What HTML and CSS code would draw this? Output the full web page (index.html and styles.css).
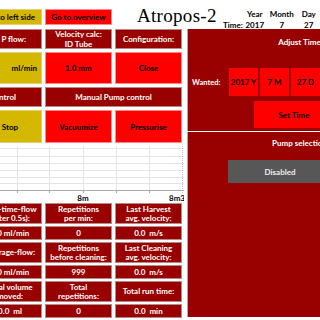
FILE: index.html
```html
<!DOCTYPE html>
<html lang="en">
<head>
    <meta charset="UTF-8">
    <title>Atropos-2</title>
    <link rel="stylesheet" href="styles.css">
</head>
<body>
    <div class="screen">
        <div class="top-bar">
            <div class="cell yellow btn-small">Go to left side</div>
            <div class="cell red btn-small">Go to overview</div>
            <div class="title">Atropos-2</div>
            <div class="clock">
                <span></span><span>Year</span><span>Month</span><span>Day</span>
                <span class="clock-label">Time:</span><span>2017</span><span>7</span><span>27</span>
            </div>
        </div>
        <div class="main">
            <div class="left-side">
                <div class="grid">
                    <div class="cell dark head shift-left flow-head">Set P flow:</div>
                    <div class="cell dark head">Velocity calc:<br>ID Tube</div>
                    <div class="cell dark head">Configuration:</div>

                    <div class="cell yellow big flow-value">ml/min</div>
                    <div class="cell red big">1.0 mm</div>
                    <div class="cell red big">Close</div>

                    <div class="cell dark head shift-left control-head">Pump control</div>
                    <div class="cell dark head wide">Manual Pump control</div>

                    <div class="cell yellow big">Stop</div>
                    <div class="cell red big">Vacuumize</div>
                    <div class="cell red big">Pressurise</div>
                </div>

                <svg class="chart" width="206" height="57" viewBox="0 0 206 57">
                    <g stroke="#e4e4e4" stroke-width="1">
                        <line x1="0" y1="2.5" x2="206" y2="2.5"/>
                        <line x1="0" y1="10.5" x2="206" y2="10.5"/>
                        <line x1="0" y1="17.5" x2="206" y2="17.5"/>
                        <line x1="0" y1="24.5" x2="206" y2="24.5"/>
                        <line x1="0" y1="31.5" x2="206" y2="31.5"/>
                        <line x1="0" y1="37.5" x2="206" y2="37.5"/>
                        <line x1="39.5" y1="0" x2="39.5" y2="44"/>
                        <line x1="71.5" y1="0" x2="71.5" y2="44"/>
                        <line x1="105.5" y1="0" x2="105.5" y2="44"/>
                        <line x1="138.5" y1="0" x2="138.5" y2="44"/>
                        <line x1="171.5" y1="0" x2="171.5" y2="44"/>
                    </g>
                    <line x1="204.5" y1="0" x2="204.5" y2="47" stroke="#bbb" stroke-dasharray="1 1"/>
                    <line x1="0" y1="44.5" x2="206" y2="44.5" stroke="#aaa"/>
                    <g stroke="#aaa">
                        <line x1="39.5" y1="44" x2="39.5" y2="47"/>
                        <line x1="71.5" y1="44" x2="71.5" y2="47"/>
                        <line x1="105.5" y1="44" x2="105.5" y2="47"/>
                        <line x1="138.5" y1="44" x2="138.5" y2="47"/>
                        <line x1="171.5" y1="44" x2="171.5" y2="47"/>
                    </g>
                    <text x="105" y="55" class="axis-label" text-anchor="middle">8m</text>
                    <text x="207" y="55" class="axis-label" text-anchor="end">8m3</text>
                </svg>

                <div class="grid stats">
                    <div class="cell dark stat-head">Real-time-flow<br>(after 0.5s):</div>
                    <div class="cell dark stat-head">Repetitions<br>per min:</div>
                    <div class="cell dark stat-head">Last Harvest<br>avg. velocity:</div>
                    <div class="cell dark stat-value">0.0 ml/min</div>
                    <div class="cell dark stat-value">0</div>
                    <div class="cell dark stat-value">0.0&nbsp; m/s</div>

                    <div class="cell dark stat-head">Average-flow:</div>
                    <div class="cell dark stat-head">Repetitions<br>before cleaning:</div>
                    <div class="cell dark stat-head">Last Cleaning<br>avg. velocity:</div>
                    <div class="cell dark stat-value">0.0 ml/min</div>
                    <div class="cell dark stat-value">999</div>
                    <div class="cell dark stat-value">0.0&nbsp; m/s</div>

                    <div class="cell dark stat-head">Total volume<br>moved:</div>
                    <div class="cell dark stat-head">Total<br>repetitions:</div>
                    <div class="cell dark stat-head">Total run time:</div>
                    <div class="cell dark stat-value">0.0&nbsp; ml</div>
                    <div class="cell dark stat-value">0</div>
                    <div class="cell dark stat-value">0.0&nbsp; min</div>
                </div>
            </div>

            <div class="right-side">
                <div class="panel adjust">
                    <div class="panel-title">Adjust Time</div>
                    <div class="wanted-row">
                        <span class="wanted-label">Wanted:</span>
                        <div class="cell red date-btn">2017 Y</div>
                        <div class="cell red date-btn">7 M</div>
                        <div class="cell red date-btn">27 D</div>
                    </div>
                    <div class="cell red set-time">Set Time</div>
                </div>
                <div class="panel pump">
                    <div class="panel-title">Pump selection</div>
                    <div class="disabled-btn">Disabled</div>
                </div>
            </div>
        </div>
    </div>
</body>
</html>
```

FILE: styles.css
```css
html, body {
    margin: 0;
    padding: 0;
    background-color: #fff;
    overflow: hidden;
}
body {
    font-family: Lato, "Liberation Sans", sans-serif;
    font-weight: bold;
    font-size: 8px;
    width: 320px;
    height: 320px;
}
.screen {
    margin-left: -22px;
    width: 460px;
}
.top-bar {
    display: flex;
    align-items: flex-start;
    height: 29px;
    padding-top: 9px;
    box-sizing: border-box;
}
.top-bar .btn-small {
    height: 16px;
    margin-right: 3px;
}
.top-bar .btn-small:first-child {
    width: 64px;
}
.top-bar .btn-small:nth-child(2) {
    width: 67px;
}
.title {
    font-family: "Liberation Serif", serif;
    font-weight: normal;
    font-size: 19px;
    margin-left: 22px;
    margin-top: -4px;
    letter-spacing: 0.3px;
}
.clock {
    display: grid;
    grid-template-columns: 24px 20px 30px 20px;
    column-gap: 2px;
    row-gap: 1px;
    margin-left: 2px;
    margin-top: 0;
    text-align: center;
    line-height: 10px;
}
.clock-label {
    text-align: right;
}
.main {
    display: flex;
    gap: 5px;
}
.left-side {
    width: 204px;
}
.grid {
    display: grid;
    grid-template-columns: 64px 67px 67px;
    grid-template-rows: 20px 32px 20px 33px;
    gap: 3px;
}
.cell {
    display: flex;
    align-items: center;
    justify-content: center;
    text-align: center;
    box-sizing: border-box;
    line-height: 10px;
    overflow: hidden;
    white-space: nowrap;
}
.dark {
    background-color: #990000;
    color: #fff;
    border: 1px solid #b58a8a;
}
.red {
    background-color: #ff0000;
    color: #000;
    border: 1px solid #ff8a8a;
}
.yellow {
    background-color: #d4b800;
    color: #000;
    border: 1px solid #e3d070;
}
.wide {
    grid-column: span 2;
}
.shift-left {
    justify-content: flex-end;
}
.flow-head {
    padding-right: 15px;
}
.control-head {
    padding-right: 25px;
}
.flow-value {
    justify-content: flex-end;
    padding-right: 4px;
}
.chart {
    display: block;
    margin-top: 3px;
}
.axis-label {
    font-family: Lato, "Liberation Sans", sans-serif;
    font-weight: bold;
    font-size: 8px;
    fill: #000;
}
.stats {
    grid-template-rows: 21px 14px 21px 14px 21px 14px;
    gap: 2px 3px;
}
.stat-head {
    line-height: 9px;
}
.right-side {
    width: 236px;
    height: 288px;
    display: flex;
    flex-direction: column;
    gap: 1px;
    background-color: #fff;
}
.panel {
    background-color: #990000;
    color: #fff;
    border-left: 1px solid #c9a0a0;
}
.adjust {
    height: 102px;
    padding-top: 8px;
    box-sizing: border-box;
}
.pump {
    flex: 1;
    padding-top: 6px;
}
.panel-title {
    text-align: center;
    padding-right: 12px;
}
.wanted-row {
    display: flex;
    align-items: center;
    margin-top: 21px;
    height: 28px;
    gap: 2px;
}
.wanted-label {
    width: 35px;
    padding-left: 4px;
    font-size: 7.5px;
}
.date-btn {
    width: 29px;
    height: 28px;
    border: none;
}
.set-time {
    width: 80px;
    height: 27px;
    margin-left: 66px;
    margin-top: 5px;
    border: none;
}
.disabled-btn {
    margin-left: 40px;
    margin-top: 12px;
    width: 104px;
    height: 23px;
    background-color: #575757;
    display: flex;
    align-items: center;
    justify-content: center;
    color: #eee;
}
```
